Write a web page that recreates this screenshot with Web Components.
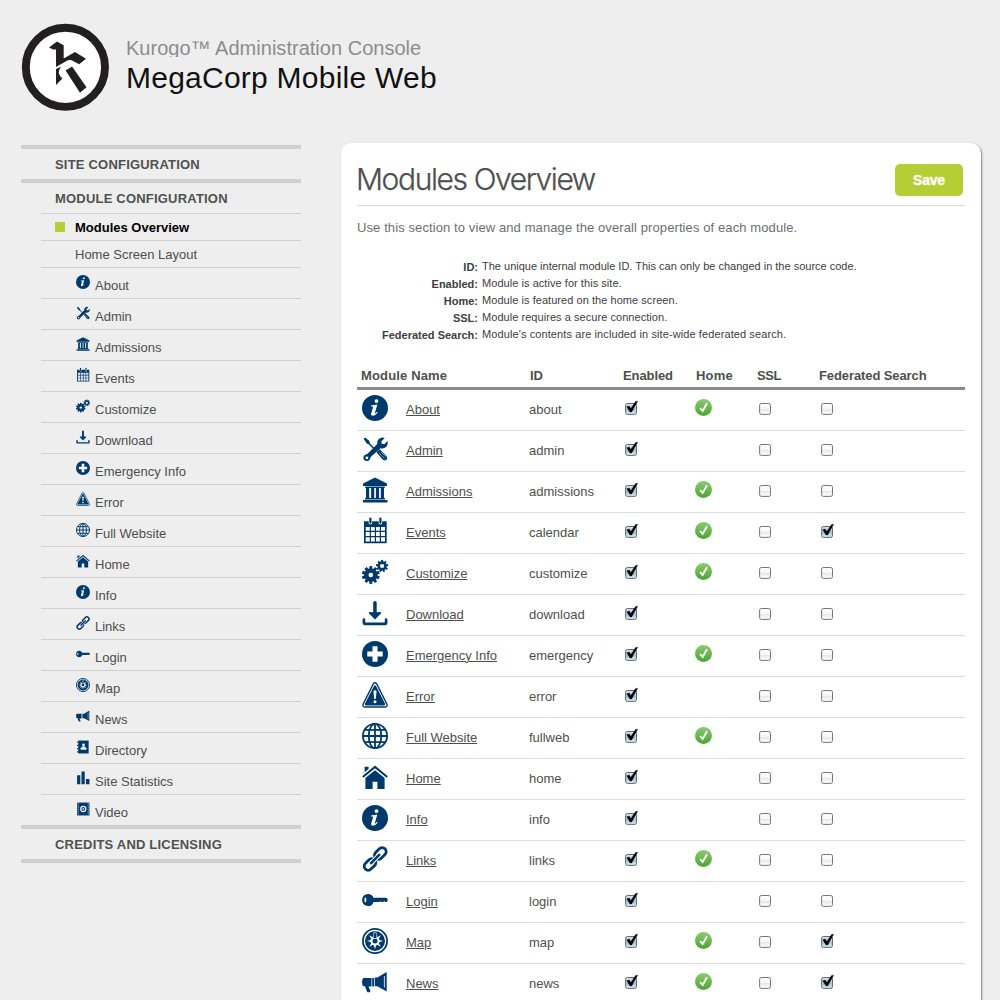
<!DOCTYPE html>
<html lang="en">
<head>
<meta charset="utf-8">
<title>Kurogo Administration Console</title>
<style>
html,body{margin:0;padding:0}
body{width:1000px;height:1000px;overflow:hidden;background:#eee;font-family:"Liberation Sans",Arial,Helvetica,sans-serif;font-size:13px;color:#4d4f4c}
</style>
</head>
<body>
<admin-console></admin-console>
<script>
const define = (name, html, setup) => {
  const tpl = document.createElement('template');
  tpl.innerHTML = html;
  customElements.define(name, class extends HTMLElement {
    connectedCallback() {
      if (this.shadowRoot) return;
      const root = this.attachShadow({ mode: 'open' });
      root.append(tpl.content.cloneNode(true));
      if (setup) setup(this, root);
    }
  });
};

const gear = (cx, cy, r, teeth, hole, tooth) => {
  let s = '';
  for (let i = 0; i < teeth; i++)
    s += `<rect x="${cx - tooth / 2}" y="${cy - r}" width="${tooth}" height="${r * .5}" transform="rotate(${i * 360 / teeth} ${cx} ${cy})"/>`;
  const mid = (r * .76 + hole) / 2;
  return s + `<circle cx="${cx}" cy="${cy}" r="${mid}" fill="none" stroke="currentColor" stroke-width="${r * .76 - hole}"/>`;
};
const info = '<circle cx="13" cy="13" r="13"/><g fill="var(--cut)"><circle cx="14.500" cy="6.100" r="1.900"/><path d="M9.100 10.400 15.300 9.600 12.900 17.900Q12.700 18.900 13.400 18.500L15 16.800 15.700 17.400Q13.400 20.800 11 20.800 8.700 20.700 9.200 18.500L11.100 11.900Q11.200 11.400 10.500 11.400L9 11.400Z"/></g>';
let rays = '';
for (let i = 0; i < 8; i++)
  rays += `<path d="M11.4 10.5 13 4.8 14.6 10.5Z" transform="rotate(${i * 45} 13 13)"/>`;

const ICONS = {
  info,
  admin: '<path d="M1.6 2.8 3.2 1.6 7.4 5 7.8 7.2 13 12.4 12 13.4 6.6 8.2 4.7 7.6Z"/><path d="M14.5 16.2 17.6 13.3 24.5 20.1Q26 22.2 24.5 23.7 22.7 25.2 20.6 23.6Z"/><path d="M17 17 22.5 22.4M19 15.8 23.7 20.6" stroke="var(--cut)" stroke-width=".5"/><path fill-rule="evenodd" d="M15.2 8Q14.900 3.700 18.4 2 20.6 1.200 22.8 2.100L19.300 5.400 19.700 7.700 22.3 8.200 25.600 4.900Q26.4 9.8 22.9 11.800 20.6 12.9 18.5 12.200L8.7 21Q8.200 24.8 4.7 25 1.5 24.8 1.3 21.8 1.6 18.7 5.3 18ZM4.900 20.5A1.4 1.4 0 1 0 4.9 23.3 1.4 1.4 0 1 0 4.9 20.5Z"/>',
  bank: '<path d="M13 .5 25 6.6V8.9H1V6.6ZM3.2 9.6H22.8V11H3.2ZM4 11H7.2V21.2H4ZM9.1 11H12.2V21.2H9.1ZM13.9 11H17V21.2H13.9ZM18.8 11H22V21.2H18.8ZM3.1 21H23V22.6H3.1ZM.9 23H25.5V25.6H.9Z"/>',
  calendar: '<path fill-rule="evenodd" d="M2 3.3H24.7V25.3H2ZM3.7 8.900V12.7H7.7V8.900ZM8.9 8.900V12.7H12.8V8.900ZM14 8.900V12.7H17.8V8.900ZM19 8.900V12.7H23V8.900ZM3.7 14V17.9H7.7V14ZM8.9 14V17.9H12.8V14ZM14 14V17.9H17.8V14ZM19 14V17.9H23V14ZM3.7 19.2V23.6H7.7V19.2ZM8.9 19.2V23.6H12.8V19.2ZM14 19.2V23.6H17.8V19.2ZM19 19.2V23.6H23V19.2Z"/><path d="M8.4 .6V4.800M18.4 .6V4.800" stroke="var(--cut)" stroke-width="3.6" stroke-linecap="round"/><path d="M8.4 .6V4.6M18.4 .6V4.6" stroke="currentColor" stroke-width="2.2" stroke-linecap="round"/>',
  gears: gear(8.8, 16, 8.9, 10, 2.3, 2.9) + gear(20.1, 7, 6.1, 9, 2.1, 2),
  download: '<path d="M11.2 2.5Q11.3 1 13 1 14.6 1 14.7 2.5V12.3L18.2 11.9Q19.8 12.1 18.9 13.4L13 19.6 7.1 13.4Q6.2 12.1 7.8 11.9L11.2 12.3Z"/><path d="M1.9 19.7V23.1Q1.9 23.9 2.7 23.9H23.3Q24.1 23.9 24.1 23.1V19.7" fill="none" stroke="currentColor" stroke-width="2.7" stroke-linecap="round" stroke-linejoin="round"/>',
  plus: '<circle cx="13" cy="13" r="13"/><path d="M10.5 5.3H15.5V10.5H20.7V15.5H15.5V20.7H10.5V15.5H5.3V10.5H10.5Z" fill="var(--cut)"/>',
  error: '<path d="M11.3 1.9Q13-.4 14.7 1.9L24.9 22.2Q25.7 24.9 23.3 25H2.7Q.3 24.9 1.1 22.2Z" fill="var(--cut)" stroke="currentColor" stroke-width="1.4"/><path d="M12 4Q13 2.600 14 4L23.1 21.8Q23.4 23.200 22.3 23.400H3.7Q2.6 23.200 2.9 21.8Z"/><path d="M11.4 9.2Q13 7.4 14.6 9.2L13.7 17H12.3Z" fill="var(--cut)"/><circle cx="13" cy="19.7" r="1.5" fill="var(--cut)"/>',
  globe: '<g fill="none" stroke="currentColor" stroke-width="1.8"><circle cx="13" cy="13" r="12.1"/><ellipse cx="13" cy="13" rx="6.3" ry="12.1"/><path d="M13 1V25M1 13H25M3 6.8H23M3 19.2H23"/></g>',
  home: '<path d="M2.6 2.8H6.6V4.9L2.6 8.3Z"/><path d="M.8 13.1 13 2.9 25.2 13.1" fill="none" stroke="currentColor" stroke-width="2"/><path d="M3.4 14.1 13 6.2 22.6 14.1V25H15.4V17.8H10.6V25H3.4Z"/>',
  links: '<g fill="none" stroke="currentColor" stroke-width="2.8"><rect x="-6.6" y="-4" width="13.2" height="8" rx="4" transform="translate(18.3 7.5) rotate(-45)"/><rect x="-6.6" y="-4" width="13.2" height="8" rx="4" transform="translate(8 18.4) rotate(-45)"/></g><path d="M9.6 16.700 16.700 9.400" stroke="var(--cut)" stroke-width="4.4"/><path d="M9.1 17.2 17.2 8.9" stroke="currentColor" stroke-width="2.6" stroke-linecap="round"/>',
  key: '<path d="M6.2 7Q10 7 11.4 10.7H24.2L25.9 12.3 25 14.9H23.1L22.2 14 21.3 14.9H19.5L18.6 14.2 17.5 14.9H11.6Q10.2 19.1 6.2 19.1 .1 18.5 .1 13 .2 7.5 6.2 7Z"/><ellipse cx="3.4" cy="13" rx="1" ry="2.4" fill="var(--cut)"/>',
  map: '<g fill="none" stroke="currentColor"><circle cx="13" cy="13" r="12.1" stroke-width="1.8"/></g><circle cx="13" cy="13" r="10"/><g fill="var(--cut)">' + rays + '<circle cx="13" cy="13" r="4.6"/></g><circle cx="13" cy="13" r="2.5"/><path d="M11 10.5 12 4H14L15 10.5Z" fill="currentColor" stroke="var(--cut)" stroke-width=".6"/>',
  news: '<path d="M24.7 3V22.4L15.3 17.3H12.9V8.6H15.3Z"/><path d="M22.4 7V18.5" stroke="var(--cut)" stroke-width=".8"/><path d="M1.6 9H9.5V17.6H6.4L8.2 21.2V23.2H5.4Q3.8 20.6 3.1 17.3H1.6Q.1 16.8.1 13.2.1 9.5 1.6 9ZM10.2 9H12.2V17.4H10.2Z"/>',
  directory: '<path d="M4.2 1H23.5V25H4.2Z"/><path d="M2 4H5M2 10H5M2 16H5M2 22H5" stroke="currentColor" stroke-width="2.4"/><circle cx="14" cy="9" r="2.7" fill="var(--cut)"/><path d="M8.7 18.3V15.5L12 11.7H16L19.3 15.5V18.3Z" fill="var(--cut)"/>',
  stats: '<path d="M2 8H8V24.5H2ZM10.2 1H16.2V24.5H10.2ZM18.5 15H25V24.5H18.5Z"/>',
  video: '<path d="M2 1H25V25H2Z"/><path d="M4.2 2V25M22.8 2V25" stroke="var(--cut)" stroke-width="1.4" stroke-dasharray="2 1.8"/><circle cx="13.5" cy="13" r="4.7" fill="none" stroke="var(--cut)" stroke-width="2.3"/><path d="M12.2 10.8 16 13 12.2 15.2Z" fill="var(--cut)"/>'
};

define('module-icon', `<style>
:host{display:block;flex:none;width:var(--icon-size,26px);height:var(--icon-size,26px);color:#003a6c;--cut:var(--icon-cut,#fff)}
svg{display:block;width:100%;height:100%;overflow:visible;fill:currentColor}
</style><svg viewBox="0 0 26 26"></svg>`, (el, root) => {
  root.querySelector('svg').innerHTML = ICONS[el.getAttribute('name')];
});

define('console-header', `<style>
:host{display:flex;align-items:flex-start;gap:16px;height:120px;padding:23px 0 0 21px;box-sizing:border-box}
svg{display:block;width:89px;height:89px}
.titles{padding-top:13px}
.product{font-size:20px;line-height:25px;height:21px;overflow:hidden;color:#8b8d8c;letter-spacing:.02px;white-space:nowrap}
.site{font-size:30px;line-height:34px;margin-top:4px;color:#111;letter-spacing:.24px;white-space:nowrap}
</style>
<svg viewBox="21 23 89 89"><circle cx="65.4" cy="67.3" r="39.6" fill="#fff" stroke="#231f20" stroke-width="7.9"/>
<g fill="#231f20"><path d="M49 47.5 57 41.6 63.7 45.3V58.6L75 52 86 58.7 79.2 64.2 71.6 60.2Q69 59.3 66 61.3L56 67V50Q55.600 48.800 53.600 49.700Z"/><path d="M56 69 61 66.700Q58.200 70.700 59 73.700 59.700 76 62.400 78.600L56 85Z"/><path d="M65.600 70.500 72 66.600 86.500 87.300 80 92.700Z"/></g></svg>
<div class="titles"><div class="product"><slot name="product"></slot></div><div class="site"><slot name="site"></slot></div></div>`);

define('nav-section', `<style>
:host{display:block;border-top:4px solid #d0d0d0}
.head{height:30px;line-height:31px;padding-left:34px;font-weight:bold;letter-spacing:.2px;color:#4f524f;white-space:nowrap}
.items{padding-left:20px}
</style><div class="head"></div><div class="items"><slot></slot></div>`, (el, root) => {
  root.querySelector('.head').textContent = el.getAttribute('heading');
});

define('nav-item', `<style>
:host{display:flex;box-sizing:border-box;height:27px;padding-left:34px;border-top:1px solid #cfcfcf;line-height:27px;white-space:nowrap;--icon-size:14px;--icon-cut:#eee}
:host([icon]){height:31px;padding-left:35px;line-height:35px}
:host([current]){padding-left:14px;font-weight:bold;color:#000}
module-icon{margin:7px 5px 0 0}
i{width:10px;height:10px;margin:8px 10px 0 0;background:#b5ce35}
</style><slot></slot>`, (el, root) => {
  let mark;
  if (el.hasAttribute('icon')) {
    mark = document.createElement('module-icon');
    mark.setAttribute('name', el.getAttribute('icon'));
  } else if (el.hasAttribute('current')) mark = document.createElement('i');
  if (mark) root.insertBefore(mark, root.querySelector('slot'));
});

define('side-nav', `<style>:host{display:block;width:280px;border-bottom:4px solid #d0d0d0}</style><slot></slot>`);

define('save-button', `<style>
:host{display:block}
button{display:block;width:68px;height:32px;padding:0;border:0;border-radius:5px;background:#b5ce35;color:#fff;font:bold 14px/32px "Liberation Sans",Arial,sans-serif;letter-spacing:-.2px;-webkit-text-stroke:.3px #fff}
</style><button><slot></slot></button>`);

define('help-term', `<style>
:host{display:flex;gap:4px;height:17px;font-size:11px;line-height:17px;white-space:nowrap;color:#3d403e}
b{width:121px;text-align:right;padding-top:1px}
span{letter-spacing:var(--track,.05px)}
</style><b></b><span><slot></slot></span>`, (el, root) => {
  root.querySelector('b').textContent = el.getAttribute('term') + ':';
});

define('check-box', `<style>
:host{display:block;width:16px;height:16px}
svg{display:block;overflow:visible}
</style><svg width="16" height="16" viewBox="0 0 16 16">
<defs><linearGradient id="off" x2="0" y2="1"><stop offset="0" stop-color="#fff"/><stop offset=".48" stop-color="#f6f6f6"/><stop offset=".5" stop-color="#e7e7e7"/><stop offset="1" stop-color="#fff"/></linearGradient>
<linearGradient id="on" x2="0" y2="1"><stop offset="0" stop-color="#d5e2ec"/><stop offset=".48" stop-color="#b7ccda"/><stop offset=".5" stop-color="#9fbacb"/><stop offset="1" stop-color="#d9eef6"/></linearGradient></defs></svg>`, (el, root) => {
  const on = el.hasAttribute('checked');
  root.querySelector('svg').insertAdjacentHTML('beforeend', on
    ? '<rect x=".6" y="3.500" width="10.900" height="10.900" rx="1.800" fill="url(#on)" stroke="#5b6d7b"/><path d="M1.700 6.700 4.300 6.100 5.800 8.500 10.600 1.400 12.700 1.200 6.700 11.900 5 11.900Z" fill="#000" stroke="#000" stroke-width=".3"/>'
    : '<rect x=".6" y="3.500" width="10.900" height="10.900" rx="1.800" fill="url(#off)" stroke="#757575"/>');
});

define('status-badge', `<style>
:host{display:block;width:17px;height:17px}svg{display:block}
</style><svg width="17" height="17" viewBox="0 0 17 17"><defs><linearGradient id="g" x2="0" y2="1"><stop offset="0" stop-color="#8dcb70"/><stop offset="1" stop-color="#4aa531"/></linearGradient></defs>
<circle cx="8.500" cy="8.500" r="8.500" fill="url(#g)"/><path d="M5.100 9.100 7.700 12 12 4.300" fill="none" stroke="#fff" stroke-width="1.900"/></svg>`);

define('module-row', `<style>
:host{display:grid;grid-template-columns:49px 123px 94px 73px 61px 62px 1fr;box-sizing:border-box;height:41px;border-bottom:1px solid #dcdcdc;line-height:39px;white-space:nowrap}
module-icon{margin:5px 0 0 5px}
a{color:inherit;text-decoration:underline;text-underline-offset:1px;text-decoration-thickness:1px}
check-box{margin:10px 0 0 2px}
status-badge{margin:9px 0 0 -1px}
</style>`, (el, root) => {
  const a = n => el.getAttribute(n);
  const box = on => `<check-box${on ? ' checked' : ''}></check-box>`;
  root.innerHTML += `<module-icon name="${a('icon')}"></module-icon><div><a>${a('label')}</a></div><div>${a('module')}</div>${box(true)}<div>${el.hasAttribute('home') ? '<status-badge></status-badge>' : ''}</div>${box(false)}${box(el.hasAttribute('search'))}`;
});

define('module-table', `<style>
:host{display:block}
.head{display:grid;grid-template-columns:172px 94px 73px 61px 62px 1fr;box-sizing:border-box;height:27px;border-bottom:3px solid #8a8a8a;font-weight:bold;line-height:26px;white-space:nowrap}
.head :first-child{padding-left:4px;letter-spacing:.15px}
.head :nth-child(3),.head :last-child{letter-spacing:-.1px}
.head :nth-child(2){padding-left:1px}
.head :nth-child(4){letter-spacing:.2px}
.head :nth-child(5){letter-spacing:-.4px}
</style>
<div class="head"><span>Module Name</span><span>ID</span><span>Enabled</span><span>Home</span><span>SSL</span><span>Federated Search</span></div>
<slot></slot>`);

define('content-panel', `<style>
:host{display:block;box-sizing:border-box;width:640px;height:900px;padding:0 16px;border-radius:10px;background:#fff;box-shadow:1px 1px 2px rgba(0,0,0,.45)}
.top{display:flex;justify-content:space-between;align-items:flex-start;box-sizing:border-box;height:63px;padding:21px 2px 0 0;border-bottom:1px solid #d8d8d8}
h1{margin:-4px 0 0 -1px;font:300 30px/38px Inter,"Liberation Sans",sans-serif;letter-spacing:-1.4px;-webkit-text-stroke:.25px #4d4f4e;color:#4d4f4e;white-space:nowrap}
p{margin:14px 0 0;line-height:16px;color:#6c706e;letter-spacing:.1px;white-space:nowrap}
.help{padding:22px 0 20px}
</style>
<div class="top"><h1><slot name="title"></slot></h1><slot name="action"></slot></div>
<p><slot name="intro"></slot></p>
<div class="help"><slot name="help"></slot></div>
<slot></slot>`);

const MODULES = [
  ['About', 'info', 'about', 1, 0], ['Admin', 'admin', 'admin', 0, 0], ['Admissions', 'bank', 'admissions', 1, 0],
  ['Events', 'calendar', 'calendar', 1, 1], ['Customize', 'gears', 'customize', 1, 0], ['Download', 'download', 'download', 0, 0],
  ['Emergency Info', 'plus', 'emergency', 1, 0], ['Error', 'error', 'error', 0, 0], ['Full Website', 'globe', 'fullweb', 1, 0],
  ['Home', 'home', 'home', 0, 0], ['Info', 'info', 'info', 0, 0], ['Links', 'links', 'links', 1, 0],
  ['Login', 'key', 'login', 0, 0], ['Map', 'map', 'map', 1, 1], ['News', 'news', 'news', 1, 1]
];
const EXTRA = [['Directory', 'directory'], ['Site Statistics', 'stats'], ['Video', 'video']];

define('admin-console', `<style>
:host{display:block;height:1000px;overflow:hidden}
.cols{display:flex;align-items:flex-start;gap:40px;padding-left:21px}
side-nav{margin-top:25px}
content-panel{margin-top:23px}
[term="ID"]{--track:0}
[term="Federated Search"]{--track:.1px}
</style>
<console-header><span slot="product">Kurogo™ Administration Console</span><span slot="site">MegaCorp Mobile Web</span></console-header>
<div class="cols">
<side-nav>
<nav-section heading="SITE CONFIGURATION"></nav-section>
<nav-section heading="MODULE CONFIGURATION">
<nav-item current>Modules Overview</nav-item><nav-item>Home Screen Layout</nav-item>
${[...MODULES, ...EXTRA].map(m => `<nav-item icon="${m[1]}">${m[0]}</nav-item>`).join('')}
</nav-section>
<nav-section heading="CREDITS AND LICENSING"></nav-section>
</side-nav>
<content-panel>
<span slot="title">Modules Overview</span>
<save-button slot="action">Save</save-button>
<span slot="intro">Use this section to view and manage the overall properties of each module.</span>
<help-term slot="help" term="ID">The unique internal module ID. This can only be changed in the source code.</help-term>
<help-term slot="help" term="Enabled">Module is active for this site.</help-term>
<help-term slot="help" term="Home">Module is featured on the home screen.</help-term>
<help-term slot="help" term="SSL">Module requires a secure connection.</help-term>
<help-term slot="help" term="Federated Search">Module's contents are included in site-wide federated search.</help-term>
<module-table>${MODULES.map(m => `<module-row label="${m[0]}" icon="${m[1]}" module="${m[2]}"${m[3] ? ' home' : ''}${m[4] ? ' search' : ''}></module-row>`).join('')}</module-table>
</content-panel>
</div>`);
</script>
</body>
</html>
